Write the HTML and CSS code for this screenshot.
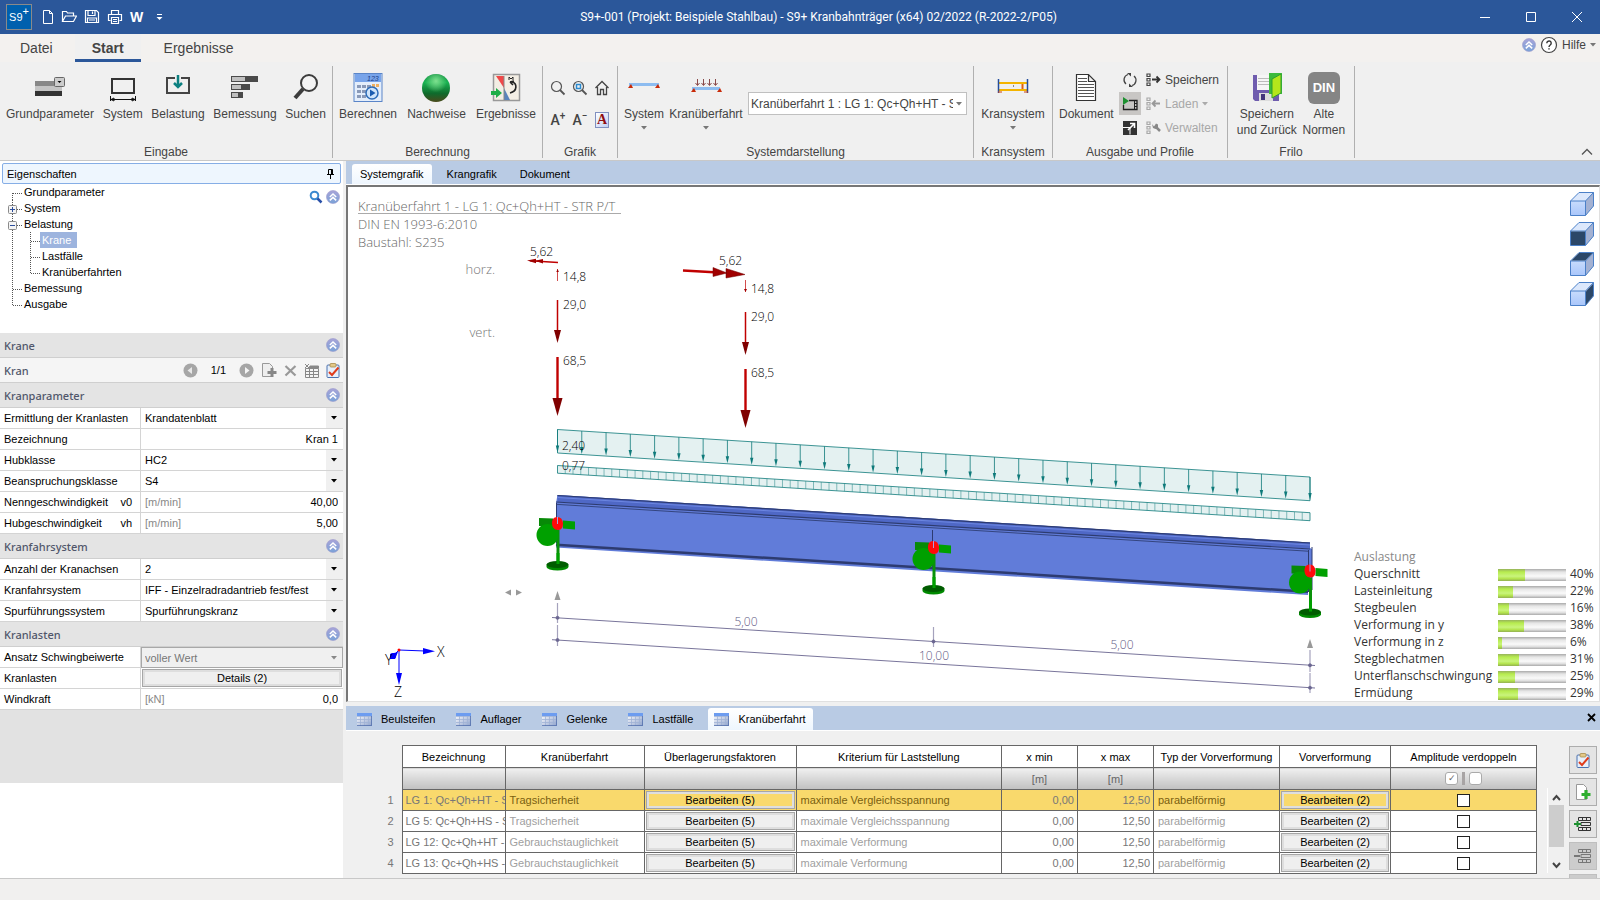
FILE: index.html
```html
<!DOCTYPE html>
<html lang="de">
<head>
    <meta charset="UTF-8" />
    <meta name="viewport" content="width=device-width, initial-scale=1.0" />
    <title>S9+ Kranbahnträger</title>
    <link rel="stylesheet" href="styles.css">
</head>
<body>
    <!-- shared symbols -->
    <svg class="symbols" width="0" height="0">
        <defs>
            <linearGradient id="gOrb" x1="0" y1="0" x2="0" y2="1"><stop offset="0" stop-color="#a8a4d8"/><stop offset="1" stop-color="#7aa2d8"/></linearGradient>
            <linearGradient id="gCell" x1="0" y1="0" x2="1" y2="1"><stop offset="0" stop-color="#fff"/><stop offset="1" stop-color="#8fa3cc"/></linearGradient>
            <linearGradient id="gFace" x1="0" y1="0" x2="0" y2="1"><stop offset="0" stop-color="#c8dcfc"/><stop offset="1" stop-color="#a9c6fb"/></linearGradient>
            <linearGradient id="gBall" x1="0" y1="0" x2="0" y2="1"><stop offset="0" stop-color="#0a8a3c"/><stop offset="0.3" stop-color="#19b352"/><stop offset="0.7" stop-color="#0f6a2c"/><stop offset="1" stop-color="#4a4a1c"/></linearGradient>
            <radialGradient id="gShine" cx="0.5" cy="0.25" r="0.4"><stop offset="0" stop-color="#7fe08f"/><stop offset="1" stop-color="#7fe08f" stop-opacity="0"/></radialGradient>
        </defs>
        <symbol id="fold" viewBox="0 0 14 14">
            <circle cx="7" cy="7" r="6.5" fill="url(#gOrb)" stroke="#9a98cc" stroke-width="0.6"/>
            <path d="M3.8 7 7 4 10.2 7M3.8 10.4 7 7.4 10.2 10.4" fill="none" stroke="#fff" stroke-width="1.5"/>
        </symbol>
        <symbol id="arrow" viewBox="0 0 6 4"><path d="M0 0h6L3 3.4z"/></symbol>
        <symbol id="sheet" viewBox="0 0 15 13">
            <rect width="15" height="13" fill="url(#gCell)"/>
            <rect width="15" height="3" fill="#6c9cf0"/>
            <path d="M0 3.5h15M0 6.5h15M0 9.5h15M3.5 3v10M7.5 3v10M11.5 3v10" stroke="#9fb2d6" stroke-width="0.8"/>
            <path d="M14.600 3v9.600H0" fill="none" stroke="#4a68a8" stroke-width="0.8"/>
        </symbol>
        <symbol id="t-mid" viewBox="0 0 18 16"><path d="M8.5 0v16M9 9.5h9" stroke="#555" stroke-dasharray="1 1" fill="none"/></symbol>
        <symbol id="t-first" viewBox="0 0 18 16"><path d="M8.5 9v7M9 9.5h9" stroke="#555" stroke-dasharray="1 1" fill="none"/></symbol>
        <symbol id="t-end" viewBox="0 0 18 16"><path d="M8.5 0v9M9 9.5h9" stroke="#555" stroke-dasharray="1 1" fill="none"/></symbol>
        <symbol id="t-line" viewBox="0 0 18 16"><path d="M8.5 0v16" stroke="#555" stroke-dasharray="1 1" fill="none"/></symbol>
        <symbol id="t-plus" viewBox="0 0 18 16"><use href="#t-mid"/><rect x="4.5" y="5.5" width="8" height="8" rx="1" fill="#f4f4f4" stroke="#8a8a8a"/><path d="M6 9.5h5M8.5 7v5" stroke="#2b4d9c"/></symbol>
        <symbol id="t-minus" viewBox="0 0 18 16"><use href="#t-mid"/><rect x="4.5" y="5.5" width="8" height="8" rx="1" fill="#f4f4f4" stroke="#8a8a8a"/><path d="M6 9.5h5" stroke="#2b4d9c"/></symbol>
        <symbol id="clip" viewBox="0 0 14 15">
            <rect x="1" y="2" width="12" height="12.5" rx="1" fill="#e6effb" stroke="#4b72b0"/>
            <rect x="4" y="0.5" width="6" height="3.5" rx="1" fill="#e3c887" stroke="#a98b4a" stroke-width="0.8"/>
            <path d="M3 9 6 12 12.5 4.5" fill="none" stroke="#e03c1c" stroke-width="2"/>
        </symbol>
        <symbol id="nodes" viewBox="0 0 5 14"><path d="M1 1h3v2.5H1zM1 5.5h3V8H1zM1 10h3v2.5H1z" fill="none" stroke="currentColor" stroke-width="1.2"/></symbol>
        <symbol id="cube" viewBox="0 0 24 24">
            <path d="M.5 9 9 .5h14.5L15.5 9z" fill="#dce8fc"/>
            <path d="M15.5 9l8-8.500V14l-8 9.5z" fill="#a3b1d2"/>
            <path d="M.5 9h15v14.5H.5z" fill="url(#gFace)"/>
            <path d="M.5 9 9 .5h14.5V14l-8 9.5H.5zM.5 9h15v14.5M15.5 9l8-8.5" fill="none" stroke="#4b80c8" stroke-linejoin="round"/>
        </symbol>
    </svg>

    <header class="titlebar">
        <div class="quick">
            <span class="logo"><span>S9</span><sup>+</sup></span>
            <button aria-label="Neu"><svg width="12" height="16" fill="none" stroke="#fff"><path d="M1.5 1.5h6l3 3v10h-9zM7.5 1.5v3h3"/></svg></button>
            <button aria-label="Öffnen"><svg width="16" height="16" fill="none" stroke="#fff" stroke-width="1.2"><path d="M1.5 12.5v-10h4l1 1.5h6v3M1.5 12.5l3-5.5h11l-3 5.5z"/></svg></button>
            <button aria-label="Sichern"><svg width="16" height="16" fill="none" stroke="#fff" stroke-width="1.2"><path d="M1.5 1.5h11l2 2v10h-13zM4 1.5v5h7v-5M8.5 2.5v2.5M3.5 13.5V9h9v4.5M5 11h6"/></svg></button>
            <button aria-label="Drucken"><svg width="16" height="16" fill="none" stroke="#fff" stroke-width="1.2"><path d="M4.5 5.5v-4h7v4M3.5 11.5h-2v-6h13v6h-2M4.5 8.5h7v6h-7zM6 10.5h4M6 12.5h4"/></svg></button>
            <button class="word" aria-label="Word">W</button>
            <button aria-label="Anpassen"><svg width="7" height="8" fill="#fff"><path d="M1 1h5v1H1zM.5 4h6l-3 3z"/></svg></button>
        </div>
        <h1>S9+-001 (Projekt: Beispiele Stahlbau) - S9+ Kranbahnträger (x64) 02/2022 (R-2022-2/P05)</h1>
        <div class="window-buttons">
            <button aria-label="Minimieren"><svg width="12" height="12" stroke="#fff"><path d="M1 6.5h10"/></svg></button>
            <button aria-label="Maximieren"><svg width="12" height="12" fill="none" stroke="#fff"><path d="M1.5 1.5h9v9h-9z"/></svg></button>
            <button aria-label="Beenden"><svg width="12" height="12" stroke="#fff"><path d="M1 1l10 10M11 1 1 11"/></svg></button>
        </div>
    </header>

    <nav class="menu">
        <a href="#datei">Datei</a>
        <a href="#start" class="active">Start</a>
        <a href="#ergebnisse">Ergebnisse</a>
        <div class="help">
            <svg width="14" height="14"><use href="#fold"/></svg>
            <svg width="18" height="18"><circle cx="9" cy="9" r="7.5" fill="#fff" stroke="#444" stroke-width="1.2"/><path d="M6.8 7.2a2.2 2.2 0 1 1 3.4 1.8c-.8.6-1.2 1-1.2 2M9 12.200v1.4" fill="none" stroke="#333" stroke-width="1.4"/></svg>
            <button>Hilfe</button>
            <svg class="grey" width="6" height="4"><use href="#arrow"/></svg>
        </div>
    </nav>

    <section class="ribbon">
        <div class="group g-eingabe">
            <div class="items">
                <button class="big"><svg width="32" height="32"><path d="M1 9h27v5H1z" fill="#888"/><path d="M1 14h27v5H1z" fill="#c4c4c4"/><path d="M1 19h27v5H1z" fill="#333"/><rect x="20.5" y="5.5" width="10" height="9" rx="1" fill="#ccc" stroke="#666"/><path d="M23.5 9h4L25.5 11z"/></svg>Grundparameter</button>
                <button class="big"><svg width="32" height="32" fill="none"><path d="M5 7h22v14H5z" stroke="#333" stroke-width="2"/><path d="M3 27.5h26M3.5 24v5M28.5 24v5M4 27.5l3-1.5v3zM28 27.5l-3-1.5v3z" stroke="#111"/></svg>System</button>
                <button class="big"><svg width="32" height="32" fill="none"><path d="M13 6H5v15h22V6h-8" stroke="#444" stroke-width="2"/><path d="M16 3v11M12 11l4 4 4-4" stroke="#0c8080" stroke-width="2.5"/></svg>Belastung</button>
                <button class="big"><svg width="32" height="32"><path d="M2 4h27v6H2zM2 12h19v6H2zM2 20h12v6H2z" fill="#4a4a4a"/><path d="M3 5h13v4H3zM3 13h9v4H3zM3 21h6v4H3z" fill="#c0c0c0"/></svg>Bemessung</button>
                <button class="big"><svg width="32" height="32" fill="none" stroke="#3c3c3c"><circle cx="19" cy="11" r="8" stroke-width="2" fill="#f4f4f4"/><path d="M13 17 5 26" stroke-width="4"/></svg>Suchen</button>
            </div>
            <h2>Eingabe</h2>
        </div>
        <div class="group g-berechnung">
            <div class="items">
                <button class="big"><svg width="32" height="32"><rect x="2" y="1.5" width="28" height="28" fill="#e4eefb" stroke="#5a85c8"/><path d="M3 2h26v8H3z" fill="#78a4ea"/><text x="15" y="9" font-size="7" font-style="italic" fill="#1b3f88">123</text><path d="M5 13h4v3H5zM10 13h4v3h-4zM15 13h4v3h-4zM5 18h4v3H5zM10 18h4v3h-4zM5 23h4v3H5zM10 23h4v3h-4z" fill="#8a9ab8"/><path d="M20 12h3v3h-3zM24 12h3v3h-3z" fill="#f0b060"/><circle cx="20" cy="21" r="6" fill="#cfe4fa" stroke="#2d6cb8" stroke-width="1.5"/><path d="M18 17.5v7l5.5-3.5z" fill="#1b5cb0"/></svg>Berechnen</button>
                <button class="big"><svg width="32" height="32"><circle cx="16" cy="16" r="14" fill="url(#gBall)"/><circle cx="16" cy="16" r="14" fill="url(#gShine)"/></svg>Nachweise</button>
                <button class="big"><svg width="32" height="32"><rect x="3.500" y="2.5" width="26" height="26" fill="#f3eee4" stroke="#999" stroke-width="1.5"/><path d="M6 4h8v12z" fill="#f04848"/><path d="M14 16v12h6z" fill="#5b84bc"/><path d="M14 4v24" stroke="#888"/><path d="M22 10c5 1 6 9-2 11M20 10l3 3M20 10l4-1" stroke="#222" stroke-width="1.6" fill="none"/><path d="M19 8V5l2 2 2-2v3" stroke="#222" fill="none"/><path d="M1 19h5v-3l6 5-6 5v-3H1z" fill="#1fae48"/></svg>Ergebnisse</button>
            </div>
            <h2>Berechnung</h2>
        </div>
        <div class="group g-grafik">
            <div class="tools">
                <button aria-label="Zoom"><svg width="16" height="16" fill="none" stroke="#555"><circle cx="6.5" cy="6.5" r="5" stroke-width="1.2"/><path d="M10 10l4.5 4.5" stroke-width="1.8"/></svg></button>
                <button aria-label="Zoom alles"><svg width="16" height="16" fill="none" stroke="#555"><circle cx="6.5" cy="6.5" r="5" stroke-width="1.2"/><path d="M10 10l4.5 4.5" stroke-width="1.8"/><path d="M4.5 4.5h4v4h-4z" stroke="#2a8ad0" stroke-width="1.5"/></svg></button>
                <button aria-label="Start"><svg width="16" height="16" fill="none" stroke="#444" stroke-width="1.3"><path d="M1.5 8 8 1.5 14.5 8M3.5 7v7.5h3v-5h3v5h3V7"/></svg></button>
                <button aria-label="Schrift größer" class="letter">A<sup>+</sup></button>
                <button aria-label="Schrift kleiner" class="letter">A<sup>−</sup></button>
                <button aria-label="Schriftart" class="letter font"><b>A</b></button>
            </div>
            <h2>Grafik</h2>
        </div>
        <div class="group g-darstellung">
            <div class="items">
                <button class="big"><svg width="32" height="32"><path d="M1 11h30v3H1z" fill="#8dbcf0"/><path d="M0 16h5l-2-4zM27 16h5l-2-4z" fill="#c82a08"/></svg>System<svg class="grey" width="6" height="4"><use href="#arrow"/></svg></button>
                <button class="big"><svg width="32" height="32"><path d="M2 15h28v3H2z" fill="#8dbcf0"/><path d="M1 20h5l-2-4zM27 20h5l-2-4z" fill="#c82a08"/><path d="M7.5 7v6M13.5 7v6M19.5 7v6M25.5 7v6M5.5 11l2 2.5 2-2.5M11.5 11l2 2.5 2-2.5M17.5 11l2 2.5 2-2.5M23.5 11l2 2.5 2-2.5" stroke="#8a4a4a" fill="none"/></svg>Kranüberfahrt<svg class="grey" width="6" height="4"><use href="#arrow"/></svg></button>
                <span class="combo ribbon-combo"><select aria-label="Darstellung"><option>Kranüberfahrt 1 : LG 1: Qc+Qh+HT - STR P/T</option></select><svg class="grey" width="6" height="4"><use href="#arrow"/></svg></span>
            </div>
            <h2>Systemdarstellung</h2>
        </div>
        <div class="group g-kransystem">
            <div class="items">
                <button class="big"><svg width="32" height="32"><path d="M2 11h29M2 18h29" stroke="#f4b400" stroke-width="2"/><path d="M1.5 7v14M30.5 7v14" stroke="#234c9c" stroke-width="1.5"/><path d="M25.5 12v5" stroke="#e06010" stroke-width="2"/><path d="M16 14h1" stroke="#222"/><path d="M1 20h4M27 20h4" stroke="#d04010"/></svg>Kransystem<svg class="grey" width="6" height="4"><use href="#arrow"/></svg></button>
            </div>
            <h2>Kransystem</h2>
        </div>
        <div class="group g-ausgabe">
            <div class="items">
                <button class="big"><svg width="32" height="32"><path d="M6.5 2.5h12l7 7v19h-19zM18.5 2.5v7h7" fill="#fff" stroke="#333" stroke-width="1.2"/><path d="M8 6.5h9M8 9.5h9M8 12.5h16M8 15.5h16M8 18.5h16M8 21.5h16M8 24.500h16" stroke="#555"/></svg>Dokument</button>
                <div class="stack">
                    <button aria-label="Aktualisieren"><svg width="16" height="16" fill="none" stroke="#444" stroke-width="1.3"><path d="M6 2.5a5.5 5.5 0 0 0-2 9.500M10 13.5a5.5 5.5 0 0 0 2-9.500"/><path d="M5 1h4v3.5zM11 15H7v-3.5z" fill="#444" stroke="none"/></svg></button>
                    <button aria-label="Vorschau" class="pressed"><svg width="16" height="16"><path d="M7 4.5h8v9H1.5V9" fill="none" stroke="#222" stroke-width="1.3"/><path d="M12.5 5v8M12.5 7.5H15M12.5 10.5H15" stroke="#222"/><path d="M1 1l6 4-6 4z" fill="#1d9030"/></svg></button>
                    <button aria-label="Fenster"><svg width="16" height="16"><path d="M1 1h14v14H1z" fill="#333"/><path d="M1 7.5h7v7" stroke="#fff" fill="none"/><path d="M6 10 12 4M8 3.5h4.5V8" stroke="#fff" stroke-width="1.6" fill="none"/></svg></button>
                </div>
                <div class="stack labelled">
                    <button><svg width="15" height="14"><use href="#nodes" width="5" height="14"/><path d="M6 6.5h7M10.5 3.5l3 3-3 3" fill="none" stroke="#333" stroke-width="1.8"/></svg>Speichern</button>
                    <button disabled><svg width="15" height="14"><use href="#nodes" width="5" height="14"/><path d="M7 6.5h7M9.5 3.5l-3 3 3 3" fill="none" stroke="#999" stroke-width="1.8"/></svg>Laden<svg class="grey" width="6" height="4"><use href="#arrow"/></svg></button>
                    <button disabled><svg width="15" height="14"><use href="#nodes" width="5" height="14"/><path d="M9 5l5 5" stroke="#888" stroke-width="2.5"/><path d="M6 3l2 2.500 2-3 2 1v3L9.500 8 7 7z" fill="#888"/></svg>Verwalten</button>
                </div>
            </div>
            <h2>Ausgabe und Profile</h2>
        </div>
        <div class="group g-frilo">
            <div class="items">
                <button class="big"><svg width="32" height="32"><path d="M2 3h26v26H4l-2-2z" fill="#6f5cae"/><path d="M6 3h15v15H6z" fill="#f5f5f5"/><path d="M7 6.5h13M7 9.5h13M7 12.5h13" stroke="#bbb"/><path d="M8 21h14v8H8z" fill="#ddd"/><path d="M10 22h4v6h-4z" fill="#44357c"/><path d="M18 1h13v21H18z" fill="#3cba3c"/><path d="M21 7l9-5v19l-9 5z" fill="#b4e61c" stroke="#2f9e2f"/></svg>Speichern<br>und Zurück</button>
                <button class="big"><span class="din">DIN</span>Alte<br>Normen</button>
            </div>
            <h2>Frilo</h2>
        </div>
        <button class="collapse" aria-label="Menüband reduzieren"><svg width="12" height="8" fill="none" stroke="#555" stroke-width="1.3"><path d="M1 6.5l5-5 5 5"/></svg></button>
    </section>

    <main>
        <aside>
            <div class="panel-title">Eigenschaften
                <svg width="9" height="11" fill="none" stroke="#000"><path d="M2.5 6V1.5h4V6M1 6.5h7M4.5 7v4"/><path d="M5.7 1.5V6" stroke-width="1.5"/></svg>
            </div>
            <div class="tree">
                <ul>
                    <li><svg><use href="#t-first"/></svg><a href="#grund">Grundparameter</a></li>
                    <li><svg><use href="#t-plus"/></svg><a href="#system">System</a></li>
                    <li><svg><use href="#t-minus"/></svg><a href="#belastung">Belastung</a></li>
                    <li><svg><use href="#t-line"/></svg><svg><use href="#t-mid"/></svg><a href="#krane" class="selected">Krane</a></li>
                    <li><svg><use href="#t-line"/></svg><svg><use href="#t-mid"/></svg><a href="#lastfaelle">Lastfälle</a></li>
                    <li><svg><use href="#t-line"/></svg><svg><use href="#t-end"/></svg><a href="#ueberfahrten">Kranüberfahrten</a></li>
                    <li><svg><use href="#t-mid"/></svg><a href="#bemessung">Bemessung</a></li>
                    <li><svg><use href="#t-end"/></svg><a href="#ausgabe">Ausgabe</a></li>
                </ul>
                <div class="tree-tools">
                    <svg width="14" height="14" fill="none"><circle cx="5.5" cy="5.5" r="3.8" stroke="#3c8ad0" stroke-width="2"/><path d="M8.5 8.5l4 4" stroke="#2a50a8" stroke-width="2.5"/></svg>
                    <svg width="14" height="14"><use href="#fold"/></svg>
                </div>
            </div>
            <div class="section">Krane <svg width="14" height="14"><use href="#fold"/></svg></div>
            <div class="section light">Kran
                <div class="pager">
                    <button aria-label="Zurück"><svg width="15" height="15"><circle cx="7.5" cy="7.5" r="7" fill="#a6a6a6"/><path d="M9 4v7L4.5 7.5z" fill="#e8e8e8"/></svg></button>
                    <span>1/1</span>
                    <button aria-label="Weiter"><svg width="15" height="15"><circle cx="7.5" cy="7.5" r="7" fill="#a6a6a6"/><path d="M6 4v7l4.5-3.500z" fill="#f4f4f4"/></svg></button>
                    <button aria-label="Neuer Kran"><svg width="16" height="16"><path d="M1.5 1.5h7l3 3v10h-10z" fill="#eee" stroke="#999"/><path d="M11 6v9M6.5 10.5h9" stroke="#888" stroke-width="3"/></svg></button>
                    <button aria-label="Kran löschen"><svg width="13" height="13"><path d="M1.5 2l10 9.500M11.5 2l-10 9.500" stroke="#999" stroke-width="2.2"/></svg></button>
                    <button aria-label="Tabelle"><svg width="15" height="15"><path d="M1.5 5.5h13v9h-13zM1.5 8.5h13M1.5 11.5h13M5.5 5v10M9.5 5v10" fill="none" stroke="#888"/><path d="M6 3h8.5v2H5zM1 1l4 4M5 1 1 5" fill="#888" stroke="#888"/></svg></button>
                    <button aria-label="Bemerkung"><svg width="14" height="15"><use href="#clip"/></svg></button>
                </div>
            </div>
            <div class="section">Kranparameter <svg width="14" height="14"><use href="#fold"/></svg></div>
            <div class="props">
                <label for="f1">Ermittlung der Kranlasten</label>
                <span class="combo"><select id="f1"><option>Krandatenblatt</option></select><svg width="6" height="4"><use href="#arrow"/></svg></span>
                <label for="f2">Bezeichnung</label>
                <span class="field"><input id="f2" value="Kran 1"></span>
                <label for="f3">Hubklasse</label>
                <span class="combo"><select id="f3"><option>HC2</option></select><svg width="6" height="4"><use href="#arrow"/></svg></span>
                <label for="f4">Beanspruchungsklasse</label>
                <span class="combo"><select id="f4"><option>S4</option></select><svg width="6" height="4"><use href="#arrow"/></svg></span>
                <label for="f5">Nenngeschwindigkeit <span>v0</span></label>
                <span class="field"><em>[m/min]</em><input id="f5" value="40,00"></span>
                <label for="f6">Hubgeschwindigkeit <span>vh</span></label>
                <span class="field"><em>[m/min]</em><input id="f6" value="5,00"></span>
            </div>
            <div class="section">Kranfahrsystem <svg width="14" height="14"><use href="#fold"/></svg></div>
            <div class="props">
                <label for="f7">Anzahl der Kranachsen</label>
                <span class="combo"><select id="f7"><option>2</option></select><svg width="6" height="4"><use href="#arrow"/></svg></span>
                <label for="f8">Kranfahrsystem</label>
                <span class="combo"><select id="f8"><option>IFF - Einzelradradantrieb fest/fest</option></select><svg width="6" height="4"><use href="#arrow"/></svg></span>
                <label for="f9">Spurführungssystem</label>
                <span class="combo"><select id="f9"><option>Spurführungskranz</option></select><svg width="6" height="4"><use href="#arrow"/></svg></span>
            </div>
            <div class="section">Kranlasten <svg width="14" height="14"><use href="#fold"/></svg></div>
            <div class="props">
                <label for="f10">Ansatz Schwingbeiwerte</label>
                <span class="combo off"><select id="f10" disabled><option>voller Wert</option></select><svg width="6" height="4"><use href="#arrow"/></svg></span>
                <label for="f11">Kranlasten</label>
                <span class="field"><button id="f11" class="edit">Details (2)</button></span>
                <label for="f12">Windkraft</label>
                <span class="field"><em>[kN]</em><input id="f12" value="0,0"></span>
            </div>
            <div class="filler"></div>
        </aside>

        <div class="work">
            <nav class="tabs">
                <a href="#systemgrafik" class="active">Systemgrafik</a>
                <a href="#krangrafik">Krangrafik</a>
                <a href="#dokument">Dokument</a>
            </nav>
            <div class="canvas">
                <svg class="drawing" viewBox="348 187 1251 514" preserveAspectRatio="xMinYMin meet">
                    <g fill="#666" class="heading">
                        <text x="358" y="211">Kranüberfahrt 1 - LG 1: Qc+Qh+HT - STR P/T</text>
                        <path d="M358 213.5h263" stroke="#aaa"/>
                        <text x="358" y="229">DIN EN 1993-6:2010</text>
                        <text x="358" y="247">Baustahl: S235</text>
                    </g>
                    <g fill="#777" text-anchor="end" class="heading">
                        <text x="495" y="274">horz.</text>
                        <text x="495" y="337">vert.</text>
                    </g>
                    <!-- wheel loads -->
                    <g id="loads" stroke="#c00000" fill="#a00000">
                        <path d="M558 262.5 530 260.8" stroke-width="1.5"/>
                        <path d="M527 260.5l9-1.8v4.5zM535 260.8l8-1.8v4.6z" stroke="none"/>
                        <path d="M557.5 269v12" stroke-width="0.7"/>
                        <path d="M683 270.5 714 272.3" stroke-width="2.5"/>
                        <path d="M713 267.5l14 5.5-14 3.500zM726 268.5l19 6-19 3.500z" stroke="#700000" stroke-width="0.5"/>
                        <path d="M745.5 280v12" stroke-width="0.7"/>
                        <path d="M744 289h3l-1.5 3zM556.3 272h2.6l-1.3-3z" stroke="none"/>
                    </g>
                    <!-- line loads -->
                    <g stroke="#0e7a7a" stroke-width="0.8" fill="#0e7a7a">
                        <path d="M557.5 429.5 1310 477v23.7L557.5 453z" fill="#e4f1f1"/>
                        <path d="M557.5 465.5 1310 512.7v8L557.5 473.2z" fill="#e4f1f1"/>
                        <g id="lineLoad"></g>
                    </g>
                    <!-- girder -->
                    <path d="M557.5 495 1310 542.5V548l2 1v40h-4v6L556 547.5V503z" fill="#617cd9"/>
                    <path d="M557.5 495 1310 542.5v6L557.5 502z" fill="#4f68c6"/>
                    <path d="M557.5 495.5 1310 543" stroke="#2d3b70" stroke-width="1.2"/>
                    <path d="M557.5 497.5 1310 545" stroke="#6c86e0"/>
                    <path d="M556 502 1310 549" stroke="#2d3b70" stroke-width="1.2"/>
                    <path d="M556 504.3 1308 551.2" stroke="#34457f"/>
                    <path d="M556 544.7 1308 591.7" stroke="#2d3b70" stroke-width="2.4"/>
                    <path d="M1308.5 550v42M1312 547v43M556.5 503v40M932.5 530v38" stroke="#2d3b70"/>
                    <g id="supports"></g>
                    <!-- dimensions -->
                    <g stroke="#6a6590" stroke-width="0.9" fill="#6a6590">
                        <path d="M552 617.5 1315 665.5M552 639.7 1315 688"/>
                        <path d="M557.5 603v20M557.5 625v21M933.5 627v20M1310 650v22M1310 673v20" stroke="#a5a2bd" stroke-width="1.2"/>
                        <circle cx="557.5" cy="617.8" r="1.5"/><circle cx="557.5" cy="640" r="1.5"/><circle cx="933.5" cy="641.5" r="1.5"/><circle cx="1310" cy="665.3" r="1.5"/><circle cx="1310" cy="687.7" r="1.5"/>
                    </g>
                    <g fill="#5f5a85" text-anchor="middle">
                        <text x="746" y="626">5,00</text><text x="934" y="660">10,00</text><text x="1122" y="649">5,00</text>
                    </g>
                    <path d="M505 592.5l6-3v6zM522 592.5l-6-3v6zM557.5 591l3 9h-6zM1310 639l3 9h-6z" fill="#999"/>
                    <g fill="#000">
                        <text x="530" y="256">5,62</text><text x="563" y="281">14,8</text><text x="563" y="309">29,0</text><text x="563" y="365">68,5</text>
                        <text x="719" y="265">5,62</text><text x="751" y="293">14,8</text><text x="751" y="321">29,0</text><text x="751" y="377">68,5</text>
                        <text x="562" y="450">2,40</text><text x="562" y="470">0,77</text>
                    </g>
                    <!-- axes -->
                    <g stroke="#0000ff" fill="#0000ff">
                        <path d="M399 650l26 1M399 650v24M399 650l-6 6"/>
                        <path d="M423 648l12 3.2-12 3zM396 673h6l-3 12zM398 652l-8 2v5l5 0z" stroke="none"/>
                        <circle cx="393" cy="656" r="3" stroke="none"/><circle cx="399" cy="650" r="1.5" fill="#f00" stroke="none"/>
                    </g>
                    <g fill="#000"><text x="437" y="657" class="axis">X</text><text x="385" y="665" class="axis">Y</text><text x="394" y="697" class="axis">Z</text></g>
                </svg>
                <div class="views">
                    <button aria-label="Isometrie"><svg width="24" height="24"><use href="#cube"/></svg></button>
                    <button aria-label="Vorne"><svg width="24" height="24"><use href="#cube"/><path d="M1 9.5h14v13.5H1z" fill="#2b4768"/></svg></button>
                    <button aria-label="Oben"><svg width="24" height="24"><use href="#cube"/><path d="M1.5 8.5 9 1h13.5L15.3 8.5z" fill="#2b4768"/></svg></button>
                    <button aria-label="Seite"><svg width="24" height="24"><use href="#cube"/><path d="M16 9.5l7-7.500v12l-7 8.5z" fill="#2b4768"/></svg></button>
                </div>
                <dl class="usage">
                    <dt class="caption">Auslastung</dt>
                    <dt>Querschnitt</dt><dd><i style="width:40%"></i></dd><dd>40%</dd>
                    <dt>Lasteinleitung</dt><dd><i style="width:22%"></i></dd><dd>22%</dd>
                    <dt>Stegbeulen</dt><dd><i style="width:16%"></i></dd><dd>16%</dd>
                    <dt>Verformung in y</dt><dd><i style="width:38%"></i></dd><dd>38%</dd>
                    <dt>Verformung in z</dt><dd><i style="width:6%"></i></dd><dd>6%</dd>
                    <dt>Stegblechatmen</dt><dd><i style="width:31%"></i></dd><dd>31%</dd>
                    <dt>Unterflanschschwingung</dt><dd><i style="width:25%"></i></dd><dd>25%</dd>
                    <dt>Ermüdung</dt><dd><i style="width:29%"></i></dd><dd>29%</dd>
                </dl>
            </div>

            <nav class="tabs lower">
                <a href="#beulsteifen"><svg width="15" height="13"><use href="#sheet"/></svg>Beulsteifen</a>
                <a href="#auflager"><svg width="15" height="13"><use href="#sheet"/></svg>Auflager</a>
                <a href="#gelenke"><svg width="15" height="13"><use href="#sheet"/></svg>Gelenke</a>
                <a href="#lf"><svg width="15" height="13"><use href="#sheet"/></svg>Lastfälle</a>
                <a href="#kran" class="active"><svg width="15" height="13"><use href="#sheet"/></svg>Kranüberfahrt</a>
                <button class="close" aria-label="Schließen"><svg width="9" height="9"><path d="M1 1l7 7M8 1 1 8" stroke="#000" stroke-width="1.8"/></svg></button>
            </nav>
            <div class="data">
                <table>
                    <colgroup><col class="c-nr"><col class="c-bez"><col class="c-kran"><col class="c-fak"><col><col class="c-x"><col class="c-x"><col class="c-typ"><col class="c-vor"><col class="c-amp"></colgroup>
                    <thead>
                        <tr><td></td><th>Bezeichnung</th><th>Kranüberfahrt</th><th>Überlagerungsfaktoren</th><th>Kriterium für Laststellung</th><th>x min</th><th>x max</th><th>Typ der Vorverformung</th><th>Vorverformung</th><th>Amplitude verdoppeln</th></tr>
                        <tr class="units"><td></td><th></th><th></th><th></th><th></th><th>[m]</th><th>[m]</th><th></th><th></th>
                            <th><span class="all"><input type="checkbox" aria-label="alle an" checked><i></i><input type="checkbox" aria-label="alle aus"></span></th></tr>
                    </thead>
                    <tbody>
                        <tr class="current"><th>1</th><td class="name">LG 1: Qc+Qh+HT - STR P/T</td><td>Tragsicherheit</td><td class="cell-btn"><button class="edit">Bearbeiten (5)</button></td><td>maximale Vergleichsspannung</td><td class="num">0,00</td><td class="num">12,50</td><td>parabelförmig</td><td class="cell-btn"><button class="edit">Bearbeiten (2)</button></td><td class="check"><input type="checkbox" aria-label="Zeile 1"></td></tr>
                        <tr><th>2</th><td class="name">LG 5: Qc+Qh+HS - STR P/T</td><td>Tragsicherheit</td><td class="cell-btn"><button class="edit">Bearbeiten (5)</button></td><td>maximale Vergleichsspannung</td><td class="num">0,00</td><td class="num">12,50</td><td>parabelförmig</td><td class="cell-btn"><button class="edit">Bearbeiten (2)</button></td><td class="check"><input type="checkbox" aria-label="Zeile 2"></td></tr>
                        <tr><th>3</th><td class="name">LG 12: Qc+Qh+HT - STR P/T</td><td>Gebrauchstauglichkeit</td><td class="cell-btn"><button class="edit">Bearbeiten (5)</button></td><td>maximale Verformung</td><td class="num">0,00</td><td class="num">12,50</td><td>parabelförmig</td><td class="cell-btn"><button class="edit">Bearbeiten (2)</button></td><td class="check"><input type="checkbox" aria-label="Zeile 3"></td></tr>
                        <tr><th>4</th><td class="name">LG 13: Qc+Qh+HS - STR P/T</td><td>Gebrauchstauglichkeit</td><td class="cell-btn"><button class="edit">Bearbeiten (5)</button></td><td>maximale Verformung</td><td class="num">0,00</td><td class="num">12,50</td><td>parabelförmig</td><td class="cell-btn"><button class="edit">Bearbeiten (2)</button></td><td class="check"><input type="checkbox" aria-label="Zeile 4"></td></tr>
                    </tbody>
                </table>
                <div class="scroll">
                    <svg width="9" height="7" fill="none" stroke="#444" stroke-width="2"><path d="M1 6l3.5-4L8 6"/></svg>
                    <span class="thumb"></span>
                    <svg width="9" height="7" fill="none" stroke="#444" stroke-width="2"><path d="M1 1l3.5 4L8 1"/></svg>
                </div>
                <div class="row-tools">
                    <button aria-label="Bemerkung"><svg width="14" height="15"><use href="#clip"/></svg></button>
                    <button aria-label="Neue Zeile"><svg width="18" height="16"><path d="M2.5.5h7l3 3v12h-10z" fill="#fff" stroke="#999"/><path d="M12 6v9M7.5 10.5h9" stroke="#2fae2f" stroke-width="3.2"/></svg></button>
                    <button aria-label="Einfügen"><svg width="18" height="16" fill="none" stroke="#333"><path d="M4.5 1.5h12v3h-12zM8.5 1.5v3M12.5 1.5v3M7 6.5h9.500v3H7zM4.5 11.5h12v3h-12zM8.5 11.5v3M12.5 11.5v3"/><path d="M0 8h7M3.5 5v6" stroke="#1d9030" stroke-width="2"/></svg></button>
                    <button aria-label="Löschen" disabled><svg width="18" height="16" fill="none" stroke="#777"><path d="M4.5 1.5h12v3h-12zM8.5 1.5v3M12.5 1.5v3M7 6.5h9.500v3H7zM4.5 11.5h12v3h-12zM8.5 11.5v3M12.5 11.5v3"/><path d="M0 8h6" stroke-width="2"/></svg></button>
                    <button aria-label="Kopieren" disabled></button>
                </div>
            </div>
        </div>
    </main>
    <footer></footer>

    <script>
    // vertical wheel load arrows: x, y start, y end, head width, head length, shaft
    const wheels = [
        [557.5, 300, 343, 7, 13, 1.5], [557.5, 357, 416, 10, 18, 2.4],
        [745.5, 312, 355, 7, 13, 1.5], [745.5, 369, 428, 10, 18, 2.4]
    ];
    const loads = document.getElementById('loads');
    wheels.forEach(([x, y1, y2, w, h, s]) => {
        loads.insertAdjacentHTML('beforeend',
            `<path d="M${x} ${y1}V${y2 - h}" stroke-width="${s}"/>
             <path d="M${x - w / 2} ${y2 - h}h${w}L${x} ${y2}z" stroke="none" fill="#800000"/>`);
    });

    // 31 fields of wind load, 97 fields of rail load
    const line = document.getElementById('lineLoad');
    const slope = 47.5 / 752.5;
    let html = '';
    for (let i = 0; i <= 31; i++) {
        const dx = 752.5 * i / 31, x = 557.5 + dx, y = 429.5 + dx * slope;
        html += `<path d="M${x} ${y}v17"/><path d="M${x - 1.7} ${y + 16}h3.4l-1.7 7z" stroke="none"/>`;
    }
    for (let i = 1; i < 97; i++) {
        const dx = 752.5 * i / 97;
        html += `<path d="M${557.5 + dx} ${465.5 + dx * slope}v7.6" stroke-opacity="0.6"/>`;
    }
    line.innerHTML = html;

    const supports = document.getElementById('supports');
    [[0, 0], [376, 24], [752.5, 47.5]].forEach(([dx, dy]) => {
        supports.insertAdjacentHTML('beforeend',
            `<g transform="translate(${dx} ${dy})">
                <path d="M539 518l14 .5v8l-14-.5z" fill="#078a07"/>
                <path d="M563 520.5l12 1v8l-12-1z" fill="#00a000"/>
                <path d="M558 530v34" stroke="#0a920a" stroke-width="3"/>
                <path d="M546.5 564.5v2.5a11 3.5 0 0 0 22 0v-2.5z" fill="#008a00"/>
                <ellipse cx="557.5" cy="564.5" rx="11" ry="3.5" fill="#005c00"/>
                <path d="M558 553v11" stroke="#00a000" stroke-width="3"/>
                <circle cx="547.5" cy="535" r="11" fill="#00a000"/>
                <path d="M557.5 517c3 0 5 2 5.500 6 0 4-1 7-5 7s-6-3-6-7c0-4 2-6 5.500-6z" fill="#ff0a0a"/>
                <path d="M557.5 517v7" stroke="#a9a0e0"/>
             </g>`);
    });
    </script>
</body>
</html>
```
FILE: styles.css
```css
* {
    box-sizing: border-box;
}

body {
    margin: 0;
    height: 100vh;
    display: flex;
    flex-direction: column;
    overflow: hidden;
    background: #f0f0f0;
    color: #000;
    font-family: 'Liberation Sans', Arial, sans-serif;
    font-size: 11px;
}

svg {
    flex: none;
    display: block;
}

.symbols {
    position: absolute;
}

h1, h2 {
    margin: 0;
    font-weight: normal;
}

a {
    color: inherit;
    text-decoration: none;
}

button {
    font: inherit;
    color: inherit;
    background: none;
    border: none;
    padding: 0;
}

input, select {
    font: inherit;
    color: inherit;
    border: none;
    background: none;
    padding: 0;
    margin: 0;
    min-width: 0;
}

.grey {
    fill: #777;
}

/* title bar */
.titlebar {
    height: 34px;
    flex: none;
    display: flex;
    align-items: center;
    background: #2b579a;
    color: #fff;
}

.quick {
    flex: 1;
    display: flex;
    align-items: center;
    gap: 7px;
    padding-left: 6px;
}

    .quick .word {
        font-size: 14px;
        font-weight: bold;
        margin-right: 6px;
    }

.logo {
    width: 26px;
    height: 26px;
    margin-right: 3px;
    display: flex;
    justify-content: center;
    align-items: center;
    border: 1px solid #8a8a8a;
    background: #0060ae;
    font-size: 11px;
}

    .logo sup {
        font-size: 11px;
        margin-top: -12px;
    }

.titlebar h1 {
    margin-left: 48px;
    font-family: Roboto, sans-serif;
    font-size: 12px;
}

.window-buttons {
    flex: 1;
    display: flex;
    justify-content: flex-end;
    gap: 34px;
    padding-right: 17px;
}

/* menu row */
.menu {
    height: 28px;
    flex: none;
    display: flex;
    padding-right: 4px;
    background: #f3f1ef;
    color: #444;
    font-size: 14px;
}

    .menu a {
        padding: 6px 20px 0;
        height: 28px;
    }

    .menu .active {
        padding: 6px 17px 0;
        margin: 0 3px 0 2px;
        font-weight: bold;
        background: #f0f0f0;
        border-bottom: 3px solid #2b579a;
    }

.help {
    margin-left: auto;
    display: flex;
    align-items: center;
    gap: 4px;
    height: 22px;
    font-size: 12px;
}

/* ribbon */
.ribbon {
    height: 99px;
    flex: none;
    display: flex;
    padding: 4px 0;
    border-bottom: 1px solid #c8c8c8;
    color: #444;
    font-size: 12px;
}

.group {
    flex: none;
    display: flex;
    flex-direction: column;
    justify-content: space-between;
    border-right: 1px solid #b0b0b0;
    height: 92px;
}

    .group h2 {
        font-size: 12px;
        line-height: 12px;
        text-align: center;
    }

.g-eingabe { width: 333px; }
.g-berechnung { width: 210px; }
.g-grafik { width: 75px; }
.g-darstellung { width: 356px; }
.g-kransystem { width: 79px; }
.g-ausgabe { width: 175px; }
.g-frilo { width: 127px; }

.items {
    display: flex;
    justify-content: space-between;
    align-items: flex-start;
    padding: 2px 6px 0;
}

.g-frilo .items,
.g-kransystem .items {
    justify-content: space-around;
}

.g-ausgabe .items {
    padding-right: 8px;
}

.big {
    display: flex;
    flex-direction: column;
    align-items: center;
    padding-top: 4px;
    line-height: 16px;
}

    .big > :first-child {
        margin-bottom: 2px;
    }

    .big .grey {
        margin-top: 4px;
    }

.din {
    width: 32px;
    height: 32px;
    line-height: 32px;
    border-radius: 6px;
    background: #858585;
    color: #fff;
    font-size: 13px;
    font-weight: bold;
}

.tools {
    display: grid;
    grid-template-columns: repeat(3, 16px);
    gap: 16px 6px;
    padding: 14px 0 0 7px;
}

.letter {
    height: 16px;
    font-family: Roboto, sans-serif;
    font-weight: 500;
    font-size: 14px;
    line-height: 16px;
    white-space: nowrap;
}

    .letter sup {
        font-size: 10px;
        line-height: 0;
    }

    .letter.font {
        margin: 0 1px;
        font-family: 'Liberation Serif', serif;
        color: #901010;
        border: 1px solid #8090c0;
        background: linear-gradient(135deg, #fff, #c0d0f4);
        line-height: 14px;
    }

.combo {
    display: flex;
    align-items: center;
}

    .combo select {
        flex: 1;
        appearance: none;
        overflow: hidden;
    }

.ribbon-combo {
    width: 219px;
    height: 23px;
    margin-top: 24px;
    padding: 0 4px 0 2px;
    gap: 3px;
    background: #fff;
    border: 1px solid #c0c0c0;
}

.stack {
    display: flex;
    flex-direction: column;
    gap: 1px;
}

    .stack button {
        width: 22px;
        height: 23px;
        display: flex;
        align-items: center;
        justify-content: center;
    }

    .stack .pressed {
        background: #c8c6c4;
    }

    .stack.labelled button {
        width: auto;
        justify-content: flex-start;
        gap: 4px;
    }

    .stack button:disabled {
        color: #a8a8a8;
    }

    .stack :disabled .grey {
        fill: #aaa;
    }

.collapse {
    margin: auto 7px 0 auto;
}

/* main area */
main {
    flex: 1;
    min-height: 0;
    display: flex;
    gap: 3px;
}

aside {
    width: 343px;
    flex: none;
    display: flex;
    flex-direction: column;
    background: #fff;
}

.panel-title {
    display: flex;
    justify-content: space-between;
    align-items: center;
    height: 21px;
    margin: 2px 2px 0;
    padding: 0 5px 0 4px;
    border: 1px solid #86aee6;
    border-radius: 2px;
    background: #eef6fe;
}

.tree {
    display: flex;
    justify-content: space-between;
    height: 149px;
}

    .tree ul {
        list-style: none;
        margin: 0;
        padding: 0 0 0 4px;
    }

    .tree li {
        display: flex;
        height: 16px;
        line-height: 16px;
    }

    .tree li svg {
        width: 18px;
        height: 16px;
    }

    .tree li a {
        padding: 0 6px 0 2px;
    }

    .tree .selected {
        background: #9db4de;
        color: #fff;
    }

.tree-tools {
    display: flex;
    gap: 3px;
    padding: 6px 3px 0 0;
}

.section {
    height: 25px;
    display: flex;
    align-items: center;
    justify-content: space-between;
    padding: 0 3px 0 4px;
    background: #e4e4e4;
    border-bottom: 1px solid #cfcfcf;
    color: #50566a;
    font-family: 'Noto Sans', sans-serif;
    font-weight: 500;
}

    .section.light {
        background: #f5f5f5;
    }

.pager {
    display: flex;
    align-items: center;
    gap: 7px;
    color: #000;
    font-family: 'Liberation Sans', Arial, sans-serif;
    font-weight: normal;
}

    .pager span {
        padding: 0 6px;
    }

.props {
    display: grid;
    grid-template-columns: 141px 1fr;
    grid-auto-rows: 21px;
}

    .props > * {
        border-bottom: 1px solid #d4d4d4;
    }

    .props label {
        display: flex;
        justify-content: space-between;
        align-items: center;
        padding: 0 8px 0 4px;
        border-right: 1px solid #d4d4d4;
    }

    .props .combo {
        padding: 0 6px 0 4px;
        background: linear-gradient(#f0f0f0, #f0f0f0) right / 17px 100% no-repeat;
    }

    .props .off {
        color: #777;
        fill: #888;
        padding: 0 5px 0 3px;
        border: 1px solid #a8a8a8;
        background: #f0f0f0;
    }

    .props select:disabled {
        opacity: 1;
    }

.field {
    display: flex;
    align-items: center;
    padding: 0 5px 0 4px;
}

    .field em {
        font-style: normal;
        color: #888;
    }

    .field input {
        flex: 1;
        text-align: right;
    }

    .field:has(.edit) {
        padding: 0 1px;
    }

.edit {
    width: 100%;
    height: 18px;
    border: 1px solid #a6a6a6;
    box-shadow: inset 0 0 0 2px #dedede;
    background: #efefef;
}

.filler {
    height: 73px;
    background: #e2e2e2;
}

.work {
    flex: 1;
    min-width: 0;
    display: flex;
    flex-direction: column;
}

.tabs {
    height: 24px;
    flex: none;
    display: flex;
    align-items: flex-end;
    padding-left: 6px;
    background: #b9cbe4;
    border-bottom: 1px solid #fff;
}

    .tabs a {
        height: 20px;
        line-height: 20px;
        padding: 0 8px;
        margin-right: 7px;
    }

    .tabs .active {
        background: linear-gradient(#fff, #eef6fe);
        border-radius: 3px 3px 0 0;
    }

    .tabs.lower {
        height: 25px;
        margin-top: 4px;
        padding-left: 5px;
    }

    .tabs.lower a {
        display: flex;
        align-items: center;
        gap: 9px;
        height: 22px;
        padding: 0 7px 0 6px;
        margin-right: 8px;
    }

.close {
    margin: 0 4px 8px auto;
}

.canvas {
    flex: 1;
    min-height: 0;
    position: relative;
    overflow: hidden;
    background: #fff;
    border: 1px solid #e0e0e0;
    border-top: 2px solid #777;
    border-left: 2px solid #777;
}

.drawing {
    width: 100%;
}

.drawing text,
.usage {
    font-family: 'Open Sans', sans-serif;
    font-size: 12px;
}

.drawing text {
    font-weight: 300;
}

.drawing .heading text {
    font-size: 13px;
}

.drawing .axis {
    font-size: 14px;
}

.views {
    position: absolute;
    top: 5px;
    right: 5px;
    display: grid;
    gap: 6px;
}

.usage {
    position: absolute;
    right: 5px;
    bottom: 0;
    margin: 0;
    display: grid;
    grid-template-columns: 144px 68px 28px;
    grid-auto-rows: 17px;
    line-height: 18px;
    color: #333;
}

    .usage .caption {
        grid-column: span 3;
        color: #888;
    }

    .usage dd {
        margin: 0 0 0 4px;
    }

    .usage dd:has(i) {
        height: 12px;
        margin: 4px 0 0;
        background: linear-gradient(#aaa, #e6e6e6 25%, #fafafa 60%, #e0e0e0 80%, #aaa);
    }

    .usage i {
        display: block;
        height: 12px;
        background: linear-gradient(#97b35c, #b7ec4e 25%, #c9f47c 60%, #b4e44e 80%, #93b052);
    }

/* result table */
.data {
    height: 147px;
    flex: none;
    display: flex;
    padding: 14px 3px 0 0;
    overflow: hidden;
}

table {
    flex: 1;
    width: 100%;
    height: 129px;
    table-layout: fixed;
    border-collapse: collapse;
}

.c-nr { width: 56px; }
.c-bez { width: 103px; }
.c-kran { width: 139px; }
.c-fak { width: 152px; }
.c-x { width: 76px; }
.c-typ { width: 126px; }
.c-vor { width: 111px; }
.c-amp { width: 146px; }

thead th {
    height: 22px;
    padding: 0;
    font-weight: normal;
    background: #fff;
    border: 1px solid #666;
}

.units th {
    color: #666;
    background: linear-gradient(#f0f0f0, #c0c0c0);
}

tbody th {
    font-weight: normal;
    text-align: right;
    padding: 0 8px 0 0;
    color: #777;
}

tbody td {
    height: 21px;
    padding: 0 4px;
    border: 1px solid #666;
    background: #fff;
    color: #a0a0a0;
    overflow: hidden;
    white-space: nowrap;
}

    tbody td.name,
    tbody td.num {
        color: #777;
        padding: 0 3px;
    }

    tbody td.num {
        text-align: right;
    }

    tbody td.cell-btn {
        padding: 0 1px;
    }

    td .edit {
        display: block;
        color: #000;
    }

.check {
    text-align: center;
}

.current td {
    background: #f9d96c;
    color: #7a6010;
}

    .current td .edit {
        background: #f9d96c;
    }

input[type="checkbox"] {
    appearance: none;
    display: inline-block;
    vertical-align: middle;
    width: 13px;
    height: 13px;
    border: 1px solid #222;
    background: #fff;
}

.all {
    display: flex;
    justify-content: center;
    gap: 4px;
}

    .all input[type="checkbox"] {
        border-color: #aaa;
        border-radius: 3px;
    }

    .all input:checked::before {
        content: '✓';
        display: block;
        font-size: 9px;
        line-height: 11px;
        text-align: center;
    }

    .all i {
        width: 3px;
        height: 13px;
        background: #a8a4a4;
    }

.scroll {
    width: 17px;
    flex: none;
    margin: 43px 5px 5px 10px;
    display: flex;
    flex-direction: column;
    align-items: center;
    padding: 6px 0 4px;
    background: #f0f0f0;
    border-left: 1px solid #fff;
}

.thumb {
    width: 15px;
    height: 42px;
    margin: 4px 0 auto;
    background: #cdcdcd;
}

.row-tools {
    flex: none;
    display: flex;
    flex-direction: column;
    gap: 4px;
    padding-top: 1px;
}

    .row-tools button {
        width: 28px;
        height: 28px;
        flex: none;
        display: flex;
        align-items: center;
        justify-content: center;
        background: #e4e4e4;
        border: 1px solid #adadad;
    }

    .row-tools button:disabled {
        background: #cccccc;
        border-color: #bfbfbf;
    }

footer {
    height: 22px;
    flex: none;
    background: #f1f0ef;
    border-top: 1px solid #c8c8c8;
}
```
